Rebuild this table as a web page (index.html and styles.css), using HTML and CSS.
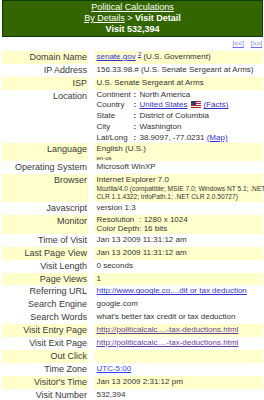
FILE: index.html
```html
<!DOCTYPE html>
<html>
<head>
<meta charset="utf-8">
<title>Visit Detail</title>
<link rel="stylesheet" href="styles.css">
</head>
<body>
<div class="page">
  <div class="header">
    <div><a href="#">Political Calculations</a></div>
    <div><a href="#">By Details</a> &gt; <b>Visit Detail</b></div>
    <div><b>Visit 532,394</b></div>
  </div>
  <div class="nav"><a href="#">[&lt;&lt;]</a><a href="#">[&gt;&gt;]</a></div>
  <table class="detail">
    <tr class="alt">
      <td class="label">Domain Name</td>
      <td class="value"><a href="#">senate.gov</a> <sup><a href="#">2</a></sup> (U.S. Government)</td>
    </tr>
    <tr>
      <td class="label">IP Address</td>
      <td class="value">156.33.98.# (U.S. Senate Sergeant at Arms)</td>
    </tr>
    <tr class="alt">
      <td class="label">ISP</td>
      <td class="value">U.S. Senate Sergeant at Arms</td>
    </tr>
    <tr>
      <td class="label">Location</td>
      <td class="value">
        <table class="kv">
          <tr><td class="k">Continent</td><td class="c">:</td><td>North America</td></tr>
          <tr><td class="k">Country</td><td class="c">:</td><td><a href="#">United States</a><svg class="flag" width="10" height="7" viewBox="0 0 10 7"><rect width="10" height="7" fill="#b22234"/><rect y="1" width="10" height="1" fill="#f2f2f2"/><rect y="3" width="10" height="1" fill="#f2f2f2"/><rect y="5" width="10" height="1" fill="#f2f2f2"/><rect width="5" height="4" fill="#3c3b6e"/></svg><a href="#">(Facts)</a></td></tr>
          <tr><td class="k">State</td><td class="c">:</td><td>District of Columbia</td></tr>
          <tr><td class="k">City</td><td class="c">:</td><td>Washington</td></tr>
          <tr><td class="k">Lat/Long</td><td class="c">:</td><td>38.9097, -77.0231 <a href="#">(Map)</a></td></tr>
        </table>
      </td>
    </tr>
    <tr class="alt">
      <td class="label">Language</td>
      <td class="value"><div class="lang">English (U.S.)</div><div class="tiny">en-us</div></td>
    </tr>
    <tr>
      <td class="label">Operating System</td>
      <td class="value">Microsoft WinXP</td>
    </tr>
    <tr class="alt">
      <td class="label">Browser</td>
      <td class="value browser"><div class="bmain">Internet Explorer 7.0</div><div class="ua">Mozilla/4.0 (compatible; MSIE 7.0; Windows NT 5.1; .NET<br>CLR 1.1.4322; InfoPath.1; .NET CLR 2.0.50727)</div></td>
    </tr>
    <tr>
      <td class="label">Javascript</td>
      <td class="value">version 1.3</td>
    </tr>
    <tr class="alt">
      <td class="label">Monitor</td>
      <td class="value">
        <table class="mon">
          <tr><td class="k">Resolution</td><td>: 1280 x 1024</td></tr>
          <tr><td class="k">Color Depth</td><td>: 16 bits</td></tr>
        </table>
      </td>
    </tr>
    <tr>
      <td class="label">Time of Visit</td>
      <td class="value">Jan 13 2009 11:31:12 am</td>
    </tr>
    <tr class="alt">
      <td class="label">Last Page View</td>
      <td class="value">Jan 13 2009 11:31:12 am</td>
    </tr>
    <tr>
      <td class="label">Visit Length</td>
      <td class="value">0 seconds</td>
    </tr>
    <tr class="alt">
      <td class="label">Page Views</td>
      <td class="value">1</td>
    </tr>
    <tr>
      <td class="label">Referring URL</td>
      <td class="value"><a href="#">http://www.google.co....dit or tax deduction</a></td>
    </tr>
    <tr>
      <td class="label">Search Engine</td>
      <td class="value">google.com</td>
    </tr>
    <tr>
      <td class="label">Search Words</td>
      <td class="value">what's better tax credit or tax deduction</td>
    </tr>
    <tr class="alt">
      <td class="label">Visit Entry Page</td>
      <td class="value"><a class="visited" href="#">http://politicalcalc....-tax-deductions.html</a></td>
    </tr>
    <tr>
      <td class="label">Visit Exit Page</td>
      <td class="value"><a class="visited" href="#">http://politicalcalc....-tax-deductions.html</a></td>
    </tr>
    <tr class="alt">
      <td class="label">Out Click</td>
      <td class="value"></td>
    </tr>
    <tr>
      <td class="label">Time Zone</td>
      <td class="value"><a class="bright" href="#">UTC-5:00</a></td>
    </tr>
    <tr class="alt">
      <td class="label">Visitor's Time</td>
      <td class="value">Jan 13 2009 2:31:12 pm</td>
    </tr>
    <tr>
      <td class="label">Visit Number</td>
      <td class="value">532,394</td>
    </tr>
  </table>
</div>
</body>
</html>
```

FILE: styles.css
```css
* { box-sizing: border-box; }

body {
  margin: 0;
  padding: 0 0 0 2px;
  font-family: "Liberation Sans", Arial, sans-serif;
  color: #333;
  background: #fff;
}

.page { width: 261px; }

.header {
  background: #336600;
  border: 1px solid #0d3d0d;
  padding: 1px 0;
  text-align: center;
  color: #fff;
  font-size: 9px;
  line-height: 11px;
}
.header a { color: #fff; text-decoration: underline; }

.nav {
  height: 14px;
  line-height: 14px;
  text-align: right;
  font-size: 6.5px;
  padding-right: 1px;
}
.nav a { color: #6b6bff; margin-left: 7px; }

a { color: #3333cc; }
a.visited { color: #6a3d9a; }
a.bright { color: #3344ff; }

.detail {
  width: 261px;
  border-collapse: separate;
  border-spacing: 0;
  table-layout: fixed;
}
.detail td { padding: 0; vertical-align: top; }

.detail td.label {
  width: 92px;
  padding-right: 1px;
  border-right: 6px solid #fff;
  text-align: right;
  font-size: 9px;
  line-height: 12.9px;
  color: #3a3a3a;
  white-space: nowrap;
}
.detail td.value {
  padding-left: 2.5px;
  font-size: 8px;
  line-height: 12.9px;
  white-space: nowrap;
}
.detail tr.alt td { background: #ffffcc; }

sup {
  font-size: 6px;
  line-height: 0;
  vertical-align: 3px;
}

.kv, .mon { border-collapse: collapse; border-spacing: 0; }
.kv td, .mon td {
  padding: 0;
  font-size: 8px;
  white-space: nowrap;
  vertical-align: top;
}
.kv td.k { width: 37px; }
.kv td { line-height: 10.75px; }
.kv td.c { width: 6px; font-weight: bold; }
.mon td { line-height: 9.5px; }
.mon td.k { width: 42px; }

.flag { vertical-align: -0.5px; margin: 0 3px 0 3px; }

.lang { line-height: 11.5px; }
.tiny { font-size: 6px; line-height: 6px; }

.detail td.browser { padding-bottom: 1px; }
.bmain { line-height: 11px; }
.ua { font-size: 6.6px; line-height: 8px; }
```
